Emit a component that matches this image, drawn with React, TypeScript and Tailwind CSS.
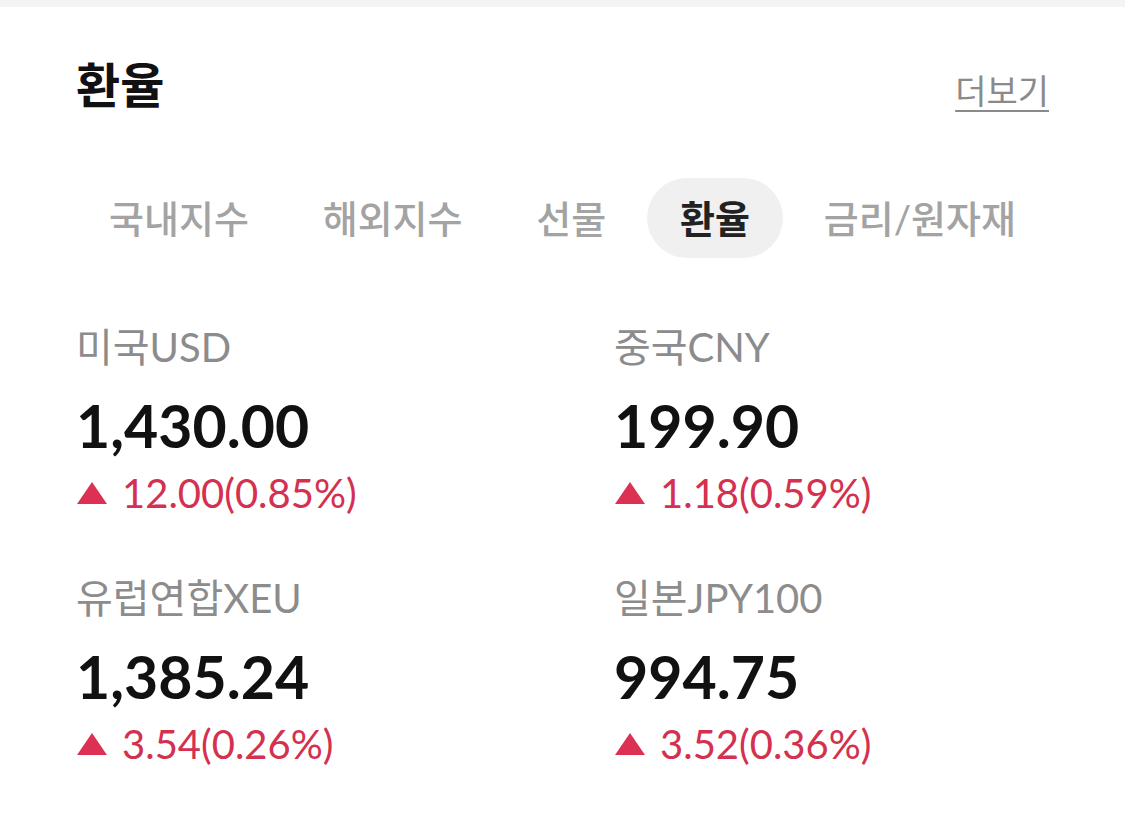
const FONT = "font-['Lato','Noto_Sans_CJK_KR',sans-serif]";

const tabs = ["국내지수", "해외지수", "선물", "환율", "금리/원자재"];

const rates = [
  { name: "미국USD", value: "1,430.00", change: "12.00(0.85%)" },
  { name: "중국CNY", value: "199.90", change: "1.18(0.59%)" },
  { name: "유럽연합XEU", value: "1,385.24", change: "3.54(0.26%)" },
  { name: "일본JPY100", value: "994.75", change: "3.52(0.36%)" },
];

function UpTriangle() {
  return (
    <svg width="32" height="24" viewBox="0 0 32 24" className="shrink-0">
      <path d="M16 1 L31 23 L1 23 Z" fill="#dc3152" />
    </svg>
  );
}

export default function App() {
  return (
    <div className={`min-h-screen bg-white ${FONT}`}>
      <div className="h-[7px] bg-[#f4f4f4]" />

      <section className="px-[76px] pt-[44px]">
        <div className="flex items-end justify-between">
          <h2 className="text-[48px] leading-[68px] font-bold text-[#111111]">환율</h2>
          <a className="mb-[6px] text-[34px] leading-[44px] text-[#8a8a8a] underline underline-offset-[6px] decoration-[2px]">
            더보기
          </a>
        </div>

        <nav className="mt-[59px] flex items-center justify-between">
          {tabs.map((t) => (
            <button
              key={t}
              className={`h-[80px] rounded-full px-[33px] text-[38px] ${
                t === "환율"
                  ? "bg-[#f0f0f0] font-bold text-[#222222]"
                  : "text-[#a3a3a3] font-medium"
              }`}
            >
              {t}
            </button>
          ))}
        </nav>

        <div className="mt-[65px] grid grid-cols-[538px_1fr] gap-y-[57px]">
          {rates.map((r) => (
            <div key={r.name} className="flex flex-col">
              <div className="text-[40px] leading-[48px] text-[#8c8c8c]">{r.name}</div>
              <div className="mt-[23px] text-[59px] leading-[64px] font-bold text-[#111111]">{r.value}</div>
              <div className="mt-[11px] flex items-center gap-[14px] text-[40px] leading-[48px] text-[#d4304f]">
                <UpTriangle />
                <span>{r.change}</span>
              </div>
            </div>
          ))}
        </div>
      </section>
    </div>
  );
}
